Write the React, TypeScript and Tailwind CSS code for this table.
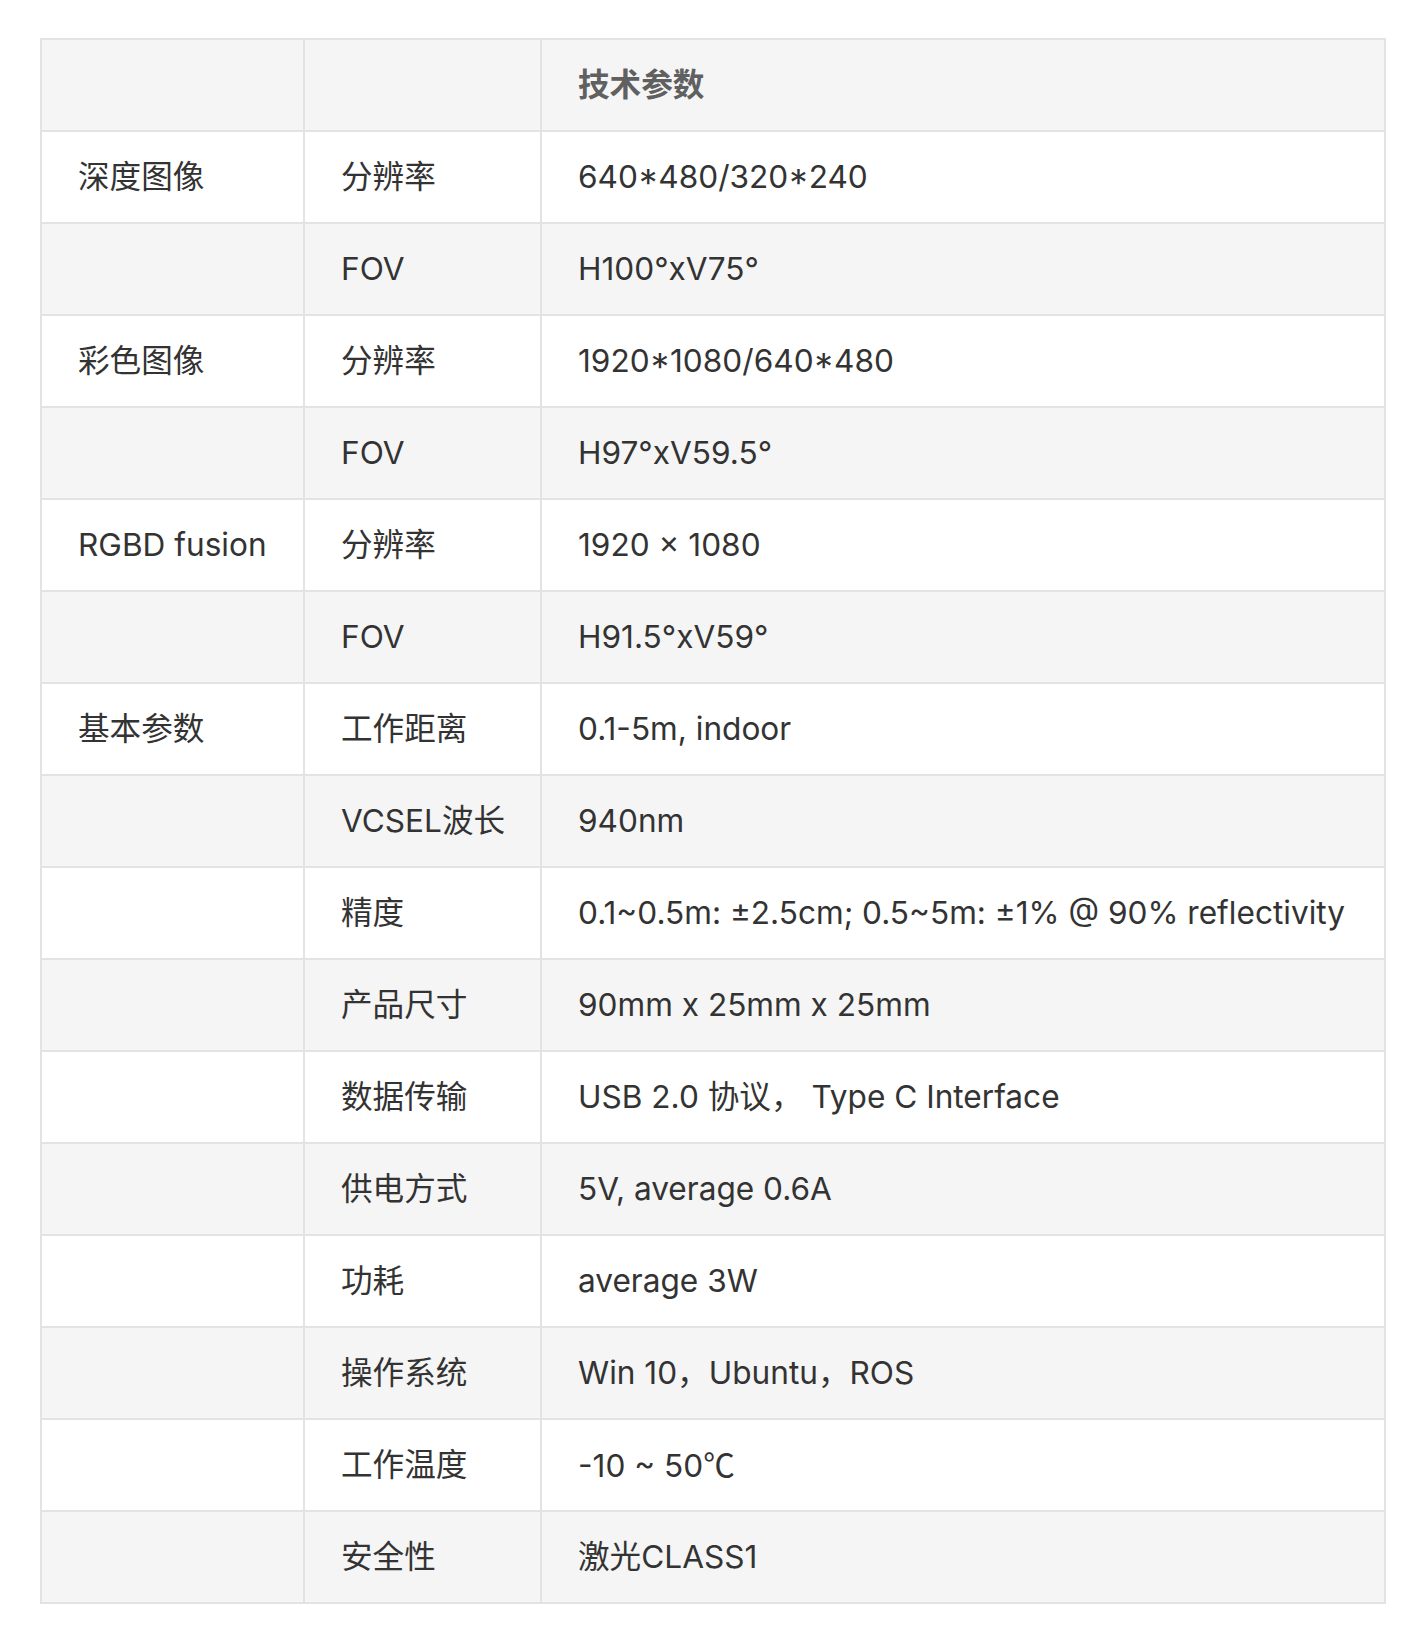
import type { ReactNode } from "react"

const cjk = { fontFamily: '"Noto Sans CJK SC", sans-serif' }

const rows: [string, string, ReactNode][] = [
  ["深度图像", "分辨率", "640*480/320*240"],
  ["", "FOV", "H100°xV75°"],
  ["彩色图像", "分辨率", "1920*1080/640*480"],
  ["", "FOV", "H97°xV59.5°"],
  ["RGBD fusion", "分辨率", "1920 × 1080"],
  ["", "FOV", "H91.5°xV59°"],
  ["基本参数", "工作距离", "0.1-5m, indoor"],
  ["", "VCSEL波长", "940nm"],
  ["", "精度", "0.1~0.5m: ±2.5cm; 0.5~5m: ±1% @ 90% reflectivity"],
  ["", "产品尺寸", "90mm x 25mm x 25mm"],
  ["", "数据传输", "USB 2.0 协议， Type C Interface"],
  ["", "供电方式", "5V, average 0.6A"],
  ["", "功耗", "average 3W"],
  ["", "操作系统", "Win 10，Ubuntu，ROS"],
  ["", "工作温度", <>-10 ~ 50<span style={cjk}>℃</span></>],
  ["", "安全性", "激光CLASS1"],
]

export default function App() {
  return (
    <div
      className="min-h-[1632px] bg-white pt-[38px] pl-[40px] pr-[28px]"
      style={{ fontFamily: 'Inter, "Noto Sans CJK SC", sans-serif' }}
    >
      <table className="w-[1346px] border-collapse table-fixed text-[31.6px] text-[#333333] whitespace-nowrap">
        <colgroup>
          <col className="w-[263px]" />
          <col className="w-[237px]" />
          <col />
        </colgroup>
        <thead>
          <tr className="bg-[#f5f5f5] h-[92px]">
            <th className="border-2 border-[#e3e3e3]"></th>
            <th className="border-2 border-[#e3e3e3]"></th>
            <th className="border-2 border-[#e3e3e3] pl-9 pr-2 text-left font-bold text-[#606060]">技术参数</th>
          </tr>
        </thead>
        <tbody>
          {rows.map((r, i) => (
            <tr key={i} className={`h-[92px] ${i % 2 === 0 ? "bg-white" : "bg-[#f5f5f5]"}`}>
              <td className="border-2 border-[#e3e3e3] pl-9 pr-2">{r[0]}</td>
              <td className="border-2 border-[#e3e3e3] pl-9 pr-2">{r[1]}</td>
              <td className="border-2 border-[#e3e3e3] pl-9 pr-2">{r[2]}</td>
            </tr>
          ))}
        </tbody>
      </table>
    </div>
  )
}
